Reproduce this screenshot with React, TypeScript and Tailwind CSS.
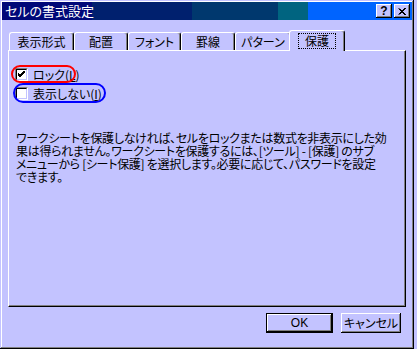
import React from "react";

const raised =
  "shadow-[inset_-1px_-1px_#000,inset_1px_1px_#fff,inset_-2px_-2px_#808080]";

function Tab({ label, w, selected }: { label: string; w: string; selected?: boolean }) {
  return (
    <div
      className={
        "relative flex items-center justify-center border-t border-l border-white rounded-tl-[3px] rounded-tr-[3px] bg-[#c3c3ff] shadow-[inset_-1px_0_#808080] border-r border-r-black " +
        w +
        (selected ? " h-[21px] z-10 -mb-px -ml-[2px]" : " h-[18px]")
      }
    >
      {selected ? (
        <span className="border border-dotted border-black px-[6px] leading-[14px]">{label}</span>
      ) : (
        <span className="leading-[14px]">{label}</span>
      )}
    </div>
  );
}

function Check({ checked }: { checked?: boolean }) {
  return (
    <div className="w-[13px] h-[13px] border-t border-l border-t-[#808080] border-l-[#808080] border-b border-r border-b-white border-r-white flex">
      <div className="flex-1 border-t border-l border-t-black border-l-black border-b border-r border-b-[#c3c3ff] border-r-[#c3c3ff] bg-white flex items-center justify-center">
        {checked && (
          <svg width="7" height="7" viewBox="0 0 7 7">
            <path d="M0 2 L2 4 L7 -1 M0 3 L2 5 L7 0 M0 4 L2 6 L7 1" stroke="#000" strokeWidth="1" fill="none" shapeRendering="crispEdges" />
          </svg>
        )}
      </div>
    </div>
  );
}

export default function App() {
  return (
    <div className="w-[417px] h-[349px] bg-[#c3c3ff] flex font-['Noto_Sans_CJK_JP',sans-serif] text-[12px] text-black [font-feature-settings:'palt']">
      <div className={"w-[414px] h-[349px] p-[2px] flex flex-col " + "shadow-[inset_-1px_-1px_#000,inset_1px_1px_#c3c3ff,inset_-2px_-2px_#808080,inset_2px_2px_#fff]"}>
        {/* Title bar */}
        <div className="h-[18px] flex items-center justify-between bg-[linear-gradient(90deg,#000878_0px,#000878_90px,#00206e_90px,#00206e_190px,#00386e_190px,#00386e_276px,#006480_276px,#006480_306px,#0064ff_306px)]">
          <span className="text-white pl-[3px] text-[13px] leading-[18px]">セルの書式設定</span>
          <div className="flex items-center gap-[2px] pr-[2px]">
            <div className={"w-[16px] h-[14px] bg-[#c3c3ff] flex items-center justify-center font-bold text-[12px] leading-none font-['Liberation_Sans',sans-serif] " + raised}>?</div>
            <div className={"w-[16px] h-[14px] bg-[#c3c3ff] flex items-center justify-center " + raised}>
              <svg width="8" height="7" viewBox="0 0 8 7">
                <path d="M0.5 0.5 L7 7 M1.5 0.5 L8 7 M7 0 L0.5 6.5 M8 0 L1.5 6.5" stroke="#000" strokeWidth="1" fill="none" />
              </svg>
            </div>
          </div>
        </div>

        {/* Tabs */}
        <div className="flex items-end ml-[7px] mt-[10px]">
          <Tab label="表示形式" w="w-[65px]" />
          <Tab label="配置" w="w-[54px]" />
          <Tab label="フォント" w="w-[53px]" />
          <Tab label="罫線" w="w-[54px]" />
          <Tab label="パターン" w="w-[56px]" />
          <Tab label="保護" w="w-[56px]" selected />
        </div>

        {/* Panel */}
        <div className="ml-[6px] w-[398px] h-[257px] border-t border-l border-white border-r border-b border-r-black border-b-black shadow-[inset_-1px_-1px_#808080] flex flex-col">
          <div className="relative mt-[17px] ml-[6px] flex flex-col gap-[6px]">
            <div className="flex items-center gap-[5px] h-[13px]">
              <Check checked />
              <span className="leading-[13px]">ロック(<u>L</u>)</span>
            </div>
            <div className="flex items-center gap-[5px] h-[13px]">
              <Check />
              <span className="leading-[13px]">表示しない(<u>I</u>)</span>
            </div>
            <div className="absolute left-[-4px] top-[-3px] w-[65px] h-[18px] border-2 border-[#ff0000] rounded-[9px]" />
            <div className="absolute left-[-2px] top-[15px] w-[93px] h-[20px] border-2 border-[#0000ff] rounded-[10px]" />
          </div>
          <p className="mt-[31px] ml-[7px] text-[12px] leading-[13px] tracking-[-0.3px] whitespace-pre">
            {"ワークシートを保護しなければ、セルをロックまたは数式を非表示にした効\n果は得られません。ワークシートを保護するには、[ツール] - [保護] のサブ\nメニューから [シート保護] を選択します。必要に応じて、パスワードを設定\nできます。"}
          </p>
        </div>

        {/* Buttons */}
        <div className="flex justify-end gap-[8px] mt-[6px] mr-[11px]">
          <div className="w-[67px] h-[20px] border border-black">
            <div className={"w-full h-full flex items-center justify-center bg-[#c3c3ff] font-['Liberation_Sans',sans-serif] text-[12px] " + raised}>OK</div>
          </div>
          <div className={"w-[60px] h-[20px] flex items-center justify-center bg-[#c3c3ff] " + raised}>キャンセル</div>
        </div>
      </div>
    </div>
  );
}
